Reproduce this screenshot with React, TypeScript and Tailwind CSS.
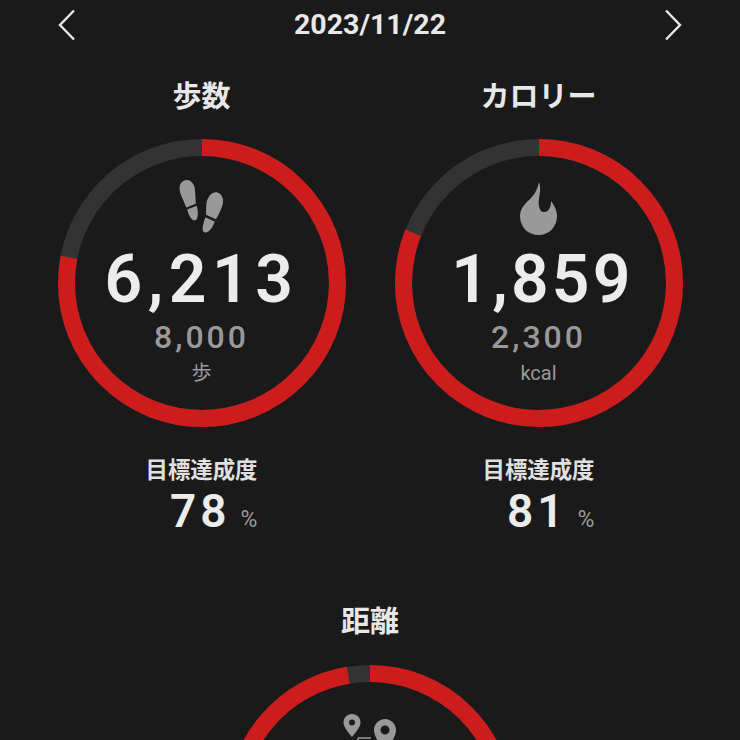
const RED = "#cc1c1c";
const TRACK = "#333333";

function Ring({ pct }: { pct: number }) {
  const r = 135.5;
  const c = 2 * Math.PI * r;
  return (
    <svg viewBox="0 0 288 288" className="absolute inset-0 w-[288px] h-[288px] -rotate-90">
      <circle cx="144" cy="144" r={r} fill="none" stroke={TRACK} strokeWidth="17" />
      <circle cx="144" cy="144" r={r} fill="none" stroke={RED} strokeWidth="17" strokeDasharray={`${c * pct} ${c}`} />
    </svg>
  );
}

function Feet() {
  return (
    <svg width="46" height="56" viewBox="0 0 46 56" fill="#999999" className="block">
      <g transform="translate(9 14) rotate(-10)">
        <path d="M-7.5 -3 C-8 -10 -5 -14 0 -14 C5 -14 8.5 -9 7.5 -2 C7 3 6.5 7 6 11 L-4 13 C-5 8 -7 2 -7.5 -3 Z" />
        <path d="M-3.5 15 L6.5 13 C7 18 6.5 24 3.5 27 C-1 28 -3 21 -3.5 15 Z" />
      </g>
      <g transform="translate(35 26) rotate(14)">
        <path d="M-8 -1 C-8.5 -8 -5 -14 0 -14 C5.5 -14 8.5 -8 8 -2 C7.5 3 6.5 8 5 12.5 L-5.5 10.5 C-6.5 7 -7.5 3 -8 -1 Z" />
        <path d="M-5.5 13 L4.5 15 C4 21 1.5 27 -2.5 28 C-6.5 28 -6.5 20 -5.5 13 Z" />
      </g>
    </svg>
  );
}

function Flame() {
  return (
    <svg width="37" height="53" viewBox="0 0 37 53" fill="#999999" className="block">
      <path d="M19 0 C21 6 20 11 19 16 C18 22 19 30 24 30 C29 30 31 25 31 19 C34 23 37 28 37 34 C37 45 29 53 18.5 53 C8 53 0 45 0 34 C0 26 6 21 11 16 C15 12 18 6 19 0 Z" />
    </svg>
  );
}

function Pins() {
  return (
    <svg width="56" height="56" viewBox="0 0 56 56" fill="#999999" className="block">
      <path fillRule="evenodd" d="M9 0 C14 0 17.5 4 17.5 8.5 C17.5 13 13 18 9 23 C5 18 0.5 13 0.5 8.5 C0.5 4 4 0 9 0 Z M9 5.5 A3 3 0 1 0 9 11.5 A3 3 0 1 0 9 5.5 Z" />
      <path fillRule="evenodd" d="M42 5 C48 5 53 10 53 16 C53 23 47 30 42 37 C37 30 31 23 31 16 C31 10 36 5 42 5 Z M42 11.5 A4.5 4.5 0 1 0 42 20.5 A4.5 4.5 0 1 0 42 11.5 Z" />
      <path d="M15 24 H28 M15 24 V30" stroke="#999999" strokeWidth="1.5" fill="none" />
    </svg>
  );
}

function Stat({ title, icon, value, valueClass, goal, unit, pct, rate }: { title: string; icon: React.ReactNode; value: string; valueClass: string; goal: string; unit: string; pct: number; rate: string }) {
  return (
    <div className="w-[288px] flex flex-col items-center">
      <div className="text-[29px] leading-[40px] font-bold text-[#e8e8e8] -mt-[1px]">{title}</div>
      <div className="relative w-[288px] h-[288px] mt-[25px] flex flex-col items-center pt-[41px]">
        <Ring pct={pct} />
        <div className="h-[56px] flex items-center justify-center">{icon}</div>
        <div className={`font-['Roboto',sans-serif] font-semibold text-[66px] leading-[66px] text-[#ececec] mt-[11px] ${valueClass}`}>{value}</div>
        <div className="font-['Roboto',sans-serif] font-medium text-[32px] leading-[36px] tracking-[3px] text-[#999999] mt-[6px]">{goal}</div>
        <div className="text-[20px] leading-[24px] text-[#999999] mt-[6px] font-['Roboto','Noto_Sans_CJK_JP',sans-serif]">{unit}</div>
      </div>
      <div className="mt-[26px] inline-flex flex-col items-end">
        <div className="text-[22.4px] leading-[30px] font-bold text-[#e0e0e0]">目標達成度</div>
        <div className="flex items-baseline gap-[10px] mt-[2px]">
          <span className="font-['Roboto',sans-serif] font-semibold text-[46px] leading-[52px] tracking-[4px] text-[#ececec]">{rate}</span>
          <span className="text-[23px] leading-[24px] text-[#999999] font-['Roboto',sans-serif]">%</span>
        </div>
      </div>
    </div>
  );
}

export default function App() {
  return (
    <div className="w-[740px] h-[740px] overflow-hidden bg-[#1a1a1a] font-['Noto_Sans_CJK_JP','Roboto',sans-serif]">
      <div className="flex items-center justify-between h-[50px] px-[57px]">
        <svg width="20" height="32" viewBox="0 0 20 32" fill="none" stroke="#e8e8e8" strokeWidth="2.4"><path d="M17 1.5 L3 16 L17 30.5" /></svg>
        <div className="font-['Roboto',sans-serif] font-bold text-[28.5px] leading-[50px] text-[#e8e8e8]">2023/11/22</div>
        <svg width="20" height="32" viewBox="0 0 20 32" fill="none" stroke="#e8e8e8" strokeWidth="2.4"><path d="M3 1.5 L17 16 L3 30.5" /></svg>
      </div>
      <div className="flex justify-center gap-[49px] mt-[25px]">
        <Stat title="歩数" icon={<Feet />} value="6,213" valueClass="tracking-[5.5px]" goal="8,000" unit="歩" pct={0.78} rate="78" />
        <Stat title="カロリー" icon={<Flame />} value="1,859" valueClass="tracking-[3.25px] pl-[8px]" goal="2,300" unit="kcal" pct={0.81} rate="81" />
      </div>
      <div className="flex flex-col items-center mt-[62px]">
        <div className="text-[29px] leading-[40px] font-bold text-[#e8e8e8]">距離</div>
        <div className="relative w-[288px] h-[288px] mt-[26px] flex flex-col items-center pt-[49px] pl-[2px]">
          <Ring pct={0.974} />
          <Pins />
        </div>
      </div>
    </div>
  );
}
